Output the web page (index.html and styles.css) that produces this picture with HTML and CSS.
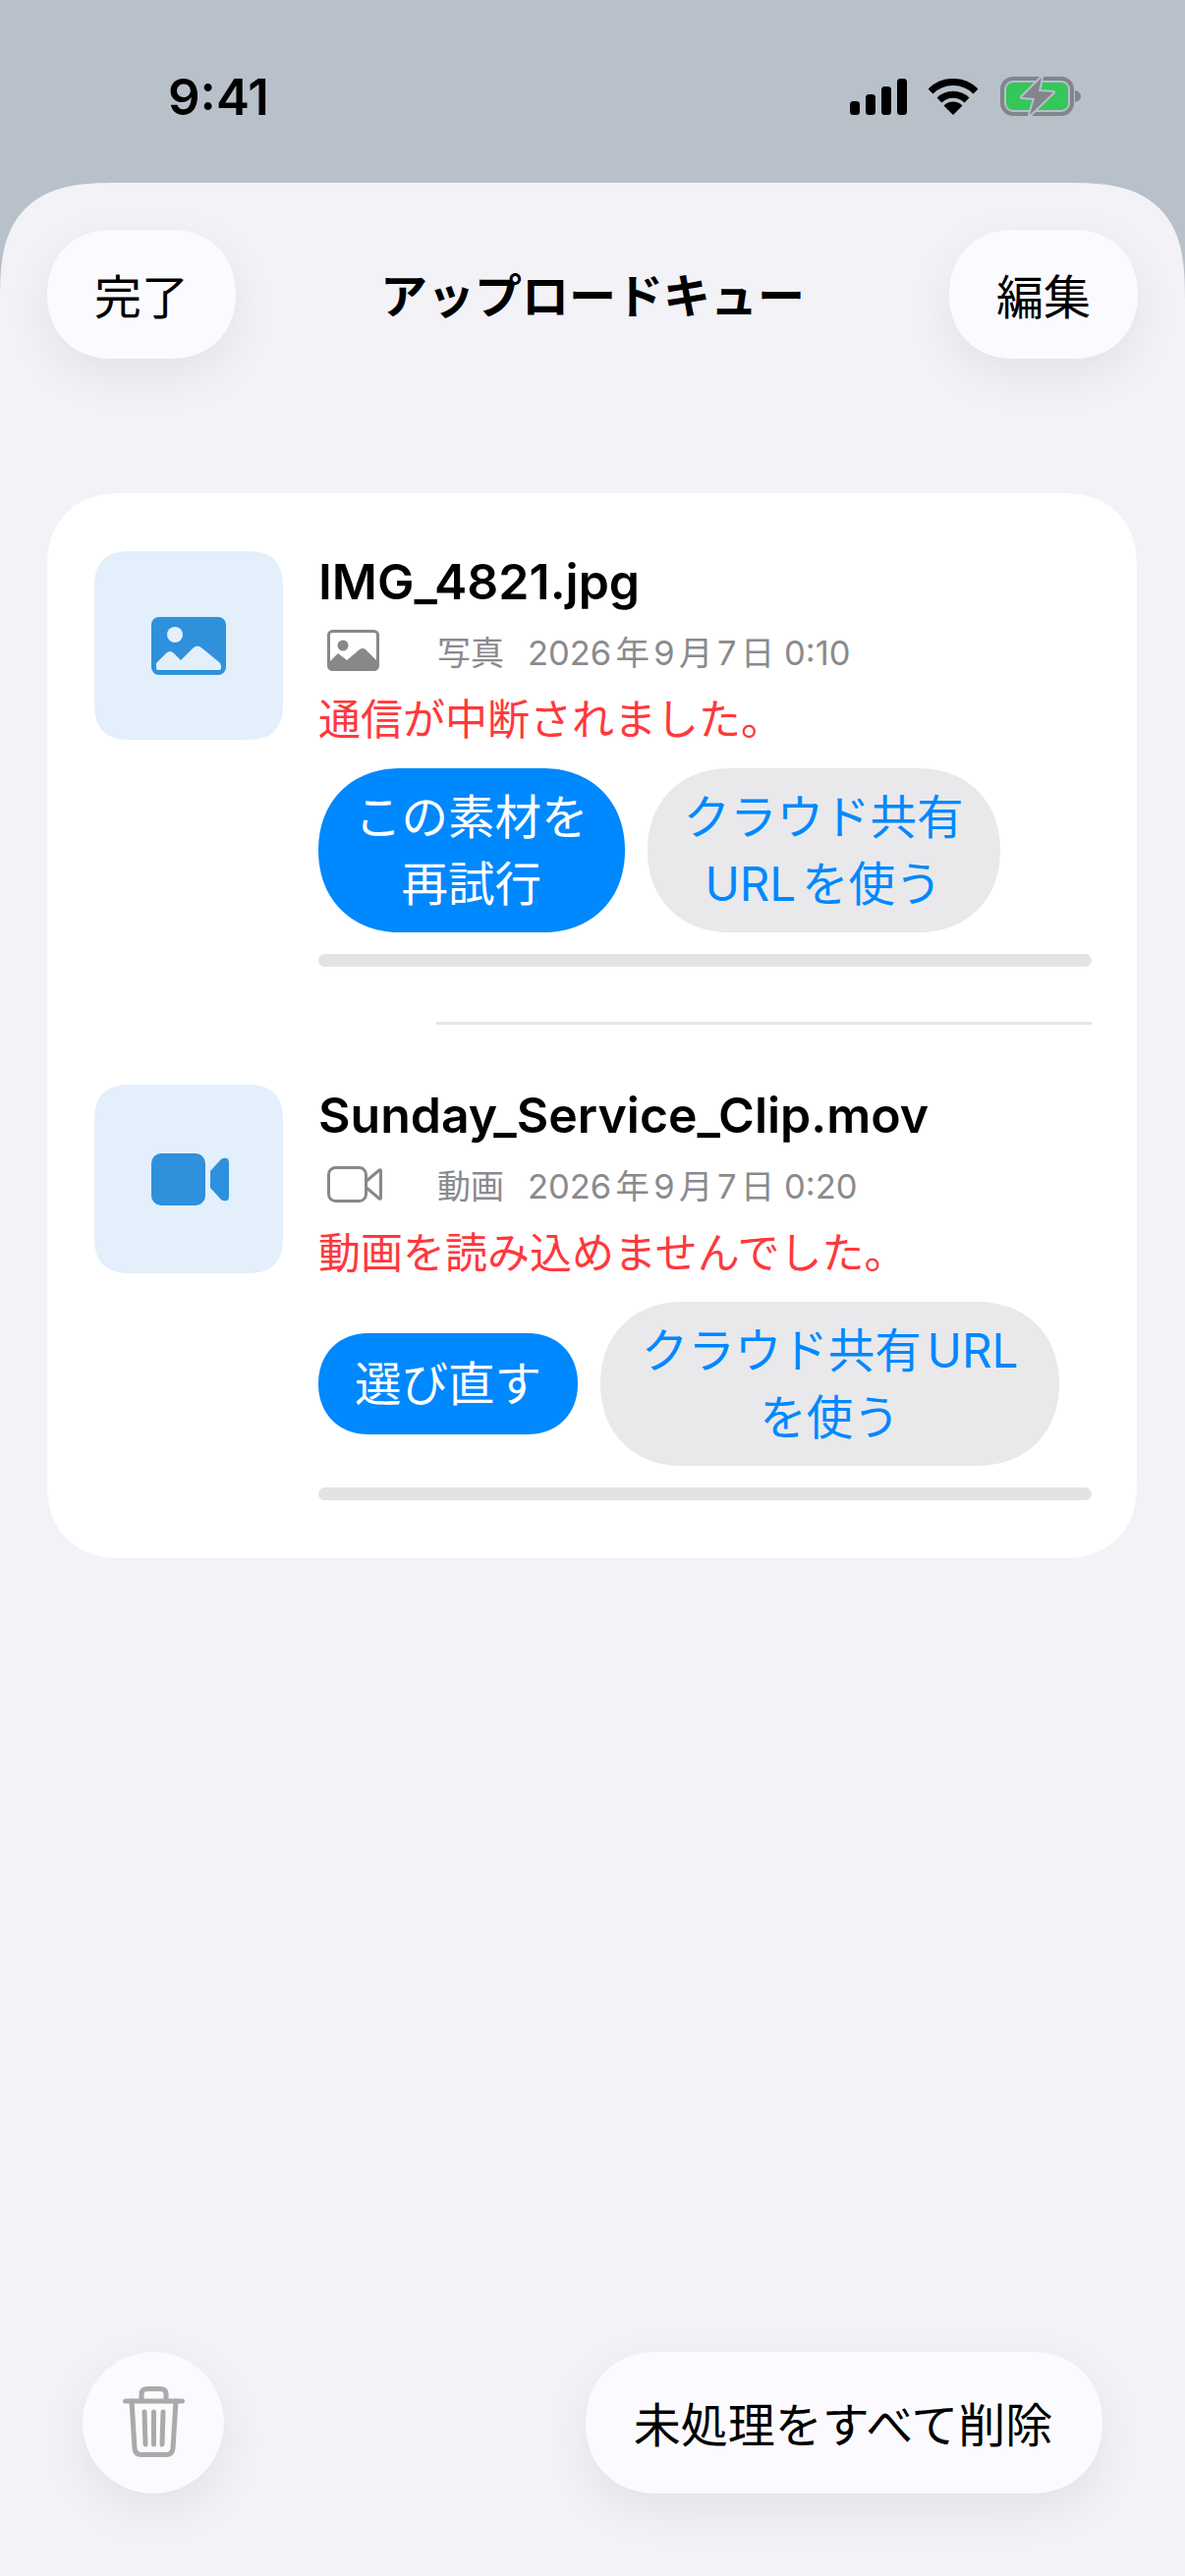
FILE: index.html
```html
<!DOCTYPE html>
<html lang="ja">
<head>
    <meta charset="UTF-8">
    <meta name="viewport" content="width=device-width, initial-scale=1.0">
    <title>アップロードキュー</title>
    <link rel="stylesheet" href="styles.css">
</head>
<body>
    <div class="status-bar">
        <span class="time">9:41</span>
        <div class="status-icons">
            <svg class="signal" width="58" height="37" viewBox="0 0 58 37">
                <rect x="0" y="23" width="10" height="14" rx="3.5"/>
                <rect x="16" y="16" width="10" height="21" rx="3.5"/>
                <rect x="32" y="8" width="10" height="29" rx="3.5"/>
                <rect x="48" y="0" width="10" height="37" rx="3.5"/>
            </svg>
            <svg class="wifi" width="50" height="37" viewBox="0 0 50 37">
                <path d="M2 13 A32.5 32.5 0 0 1 48 13" fill="none" stroke="#000" stroke-width="7"/>
                <path d="M11 22 A20 20 0 0 1 39 22" fill="none" stroke="#000" stroke-width="7"/>
                <path d="M25 37 L15.5 27.5 A13.4 13.4 0 0 1 34.5 27.5 Z"/>
            </svg>
            <svg class="battery" width="82" height="41" viewBox="0 0 82 41">
                <rect x="2" y="2" width="71" height="36" rx="11" fill="none" stroke="#82858a" stroke-width="4"/>
                <rect x="6" y="6" width="63" height="28" rx="7" fill="#34c759"/>
                <path d="M76 14 C80 15 82 17 82 20 C82 23 80 25 76 26 Z" fill="#82858a"/>
                <path d="M42 1 L22 21 L35 22 L30 39 L54 16 L39 15 Z" fill="#82858a" stroke="#b8c0ca" stroke-width="4" stroke-linejoin="round" paint-order="stroke"/>
            </svg>
        </div>
    </div>

    <div class="sheet">
        <div class="toolbar">
            <button class="float-btn">完了</button>
            <h1 class="title">アップロードキュー</h1>
            <button class="float-btn">編集</button>
        </div>

        <div class="card">
            <div class="item">
                <div class="thumb">
                    <svg width="76" height="59" viewBox="0 0 76 59">
                        <rect width="76" height="59" rx="8" fill="#2f90dc"/>
                        <ellipse cx="24" cy="18" rx="8" ry="8" fill="#e3effb"/>
                        <path d="M5 47 L15 37 Q19 33 23 37 L30 44 L42 32 Q47 27 52 32 L69 46 Q71 48 71 50 L71 52 Q71 54 68 54 L8 54 Q5 54 5 52 Z" fill="#e3effb"/>
                    </svg>
                </div>
                <div class="info">
                    <div class="name">IMG_4821.jpg</div>
                    <div class="meta">
                        <span class="meta-icon">
                            <svg width="53" height="42" viewBox="0 0 53 42">
                                <rect x="1.500" y="1.500" width="50" height="39" rx="4" fill="none" stroke="#888" stroke-width="3"/>
                                <circle cx="16" cy="16" r="5.500" fill="#888"/>
                                <path d="M2 33 L11 24 L20 31 L33 20 Q36 18 39 20 L51 32 L51 37 Q51 41 47 41 L6 41 Q2 41 2 37 Z" fill="#888"/>
                            </svg>
                        </span>
                        <span class="kind">写真</span>
                        <span>2026年9月7日 0:10</span>
                    </div>
                    <div class="error">通信が中断されました。</div>
                    <div class="actions">
                        <button class="pill primary">この素材を<br>再試行</button>
                        <button class="pill secondary">クラウド共有<br>URLを使う</button>
                    </div>
                    <div class="progress"></div>
                </div>
            </div>

            <div class="divider"></div>

            <div class="item">
                <div class="thumb thumb-video">
                    <svg width="79" height="53" viewBox="0 0 79 53">
                        <rect width="55" height="53" rx="10" fill="#2f90dc"/>
                        <path d="M60 18 L71 6 Q74 4 77 5 Q79 6 79 9 L79 44 Q79 47 77 48 Q74 49 71 47 L60 35 Z" fill="#2f90dc"/>
                    </svg>
                </div>
                <div class="info">
                    <div class="name">Sunday_Service_Clip.mov</div>
                    <div class="meta">
                        <span class="meta-icon">
                            <svg width="56" height="37" viewBox="0 0 56 37">
                                <rect x="1.500" y="1.500" width="38" height="34" rx="7" fill="none" stroke="#888" stroke-width="3"/>
                                <path d="M40 15 L53 4 Q54.500 3 54.500 5 L54.500 32 Q54.500 34 53 33 L40 22" fill="none" stroke="#888" stroke-width="3"/>
                            </svg>
                        </span>
                        <span class="kind">動画</span>
                        <span>2026年9月7日 0:20</span>
                    </div>
                    <div class="error">動画を読み込めませんでした。</div>
                    <div class="actions">
                        <button class="pill primary">選び直す</button>
                        <button class="pill secondary pill-wide">クラウド共有URL<br>を使う</button>
                    </div>
                    <div class="progress"></div>
                </div>
            </div>
        </div>

        <div class="bottom-bar">
            <button class="float-btn trash">
                <svg width="63" height="72" viewBox="0 0 63 72" fill="none" stroke="#aaa" stroke-width="5" stroke-linecap="round" stroke-linejoin="round">
                    <path d="M2.500 15 L60.500 15"/>
                    <path d="M19 15 L19 8 Q19 2.500 25 2.500 L38 2.500 Q44 2.500 44 8 L44 15"/>
                    <path d="M9 15 L12 63 Q12.500 69.500 19 69.500 L44 69.500 Q50.500 69.500 51 63 L54 15"/>
                    <path d="M22 26 L23 59 M31.500 26 L31.500 59 M41 26 L40 59"/>
                </svg>
            </button>
            <button class="float-btn clear">未処理をすべて削除</button>
        </div>
    </div>
</body>
</html>
```

FILE: styles.css
```css
* {
    box-sizing: border-box;
}

body {
    margin: 0;
    width: 1206px;
    height: 2622px;
    display: flex;
    flex-direction: column;
    background: #b8c0ca;
    font-family: "Inter", "Noto Sans CJK JP", sans-serif;
    color: #000;
    text-autospace: normal;
    overflow: hidden;
}

button {
    border: none;
    font-family: inherit;
}

/* status bar */
.status-bar {
    height: 186px;
    flex-shrink: 0;
    padding: 64px 106px 0 171px;
    display: flex;
    justify-content: space-between;
    align-items: flex-start;
}

.time {
    font-size: 51px;
    font-weight: 600;
    line-height: 70px;
}

.status-icons {
    display: flex;
    align-items: center;
    gap: 22px;
    padding-top: 14px;
}

.battery {
    margin-left: 1px;
}

/* sheet */
.sheet {
    flex: 1;
    display: flex;
    flex-direction: column;
    background: #f2f2f7;
    border-radius: 120px 120px 0 0;
    corner-shape: superellipse(1.5);
}

.toolbar {
    display: flex;
    justify-content: space-between;
    align-items: center;
    padding: 48px 48px 0 48px;
}

.title {
    margin: 0 0 3px 0;
    font-size: 48px;
    font-weight: 700;
}

.float-btn {
    height: 131px;
    padding: 0 48px 2px 48px;
    border-radius: 66px;
    corner-shape: superellipse(1.1);
    background: #fbfbff;
    box-shadow: 0 16px 48px rgba(0, 0, 0, 0.07);
    font-size: 48px;
    color: #000;
}

/* card */
.card {
    margin: 137px 49px 0 48px;
    padding: 59px 46px 59px 48px;
    background: #fff;
    border-radius: 76px;
    corner-shape: superellipse(1.2);
}

.item {
    display: flex;
    align-items: flex-start;
    gap: 36px;
}

.thumb {
    width: 192px;
    height: 192px;
    flex-shrink: 0;
    display: flex;
    align-items: center;
    justify-content: center;
    background: #e3effb;
    border-radius: 38px;
    corner-shape: superellipse(1.4);
}

.thumb-video {
    padding-left: 3px;
}

.info {
    flex: 1;
    min-width: 0;
}

.name {
    margin-top: -1px;
    font-size: 50px;
    font-weight: 600;
    line-height: 64px;
}

.meta {
    display: flex;
    align-items: center;
    gap: 24px;
    height: 44px;
    margin-top: 16px;
    font-size: 34.500px;
    color: #8a8a8e;
}

.meta-icon {
    width: 121px;
    padding-left: 9px;
    margin-right: -24px;
    display: flex;
    align-items: center;
}

.kind {
    font-size: 34px;
}

.error {
    margin-top: 24px;
    font-size: 43px;
    line-height: 48px;
    color: #ff383c;
}

.actions {
    margin-top: 26px;
    display: flex;
    align-items: center;
    gap: 23px;
}

.pill {
    min-height: 103px;
    padding: 16px 37px 15px 37px;
    border-radius: 84px;
    corner-shape: superellipse(1.1);
    font-size: 47.500px;
    line-height: 68px;
}

.pill-wide {
    min-width: 467px;
}

.primary {
    background: #0088ff;
    color: #fff;
}

.secondary {
    background: #e9e9eb;
    color: #0088ff;
}

.progress {
    height: 13px;
    margin-top: 22px;
    background: #e3e3e6;
    border-radius: 7px;
}

.divider {
    height: 3px;
    margin: 56px 0 61px 348px;
    background: #e5e5ea;
}

/* bottom buttons */
.bottom-bar {
    margin-top: auto;
    padding: 0 84px 84px 84px;
    display: flex;
    justify-content: space-between;
    align-items: center;
}

.trash {
    width: 144px;
    height: 144px;
    padding: 0 0 3px 0;
    border-radius: 50%;
    corner-shape: round;
    display: flex;
    align-items: center;
    justify-content: center;
}

.clear {
    width: 526px;
    height: 144px;
    padding: 0 2px 2px 0;
    border-radius: 72px;
}
```
